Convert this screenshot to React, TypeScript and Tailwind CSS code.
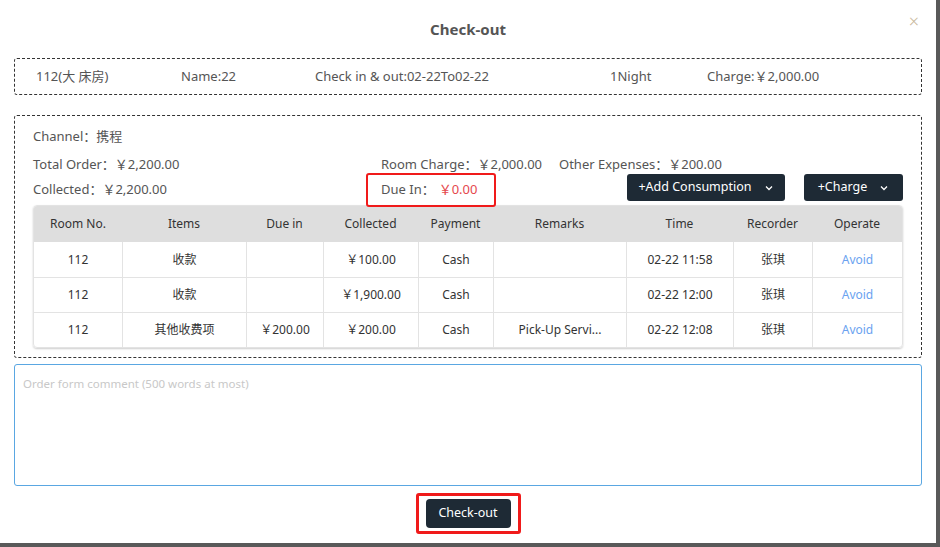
import React from "react";

const F = { fontFamily: '"Noto Sans", "Noto Sans CJK SC", sans-serif' };

const Chevron = () => (
  <svg width="10" height="10" viewBox="0 0 10 10" className="ml-[12px]">
    <path d="M2 3.5 L5 6.5 L8 3.5" fill="none" stroke="white" strokeWidth="1.3" />
  </svg>
);

const cols = [
  { h: "Room No.", w: "w-[88px]" },
  { h: "Items", w: "w-[124px]" },
  { h: "Due in", w: "w-[77px]" },
  { h: "Collected", w: "w-[95px]" },
  { h: "Payment", w: "w-[75px]" },
  { h: "Remarks", w: "w-[133px]" },
  { h: "Time", w: "w-[107px]" },
  { h: "Recorder", w: "w-[79px]" },
  { h: "Operate", w: "flex-1" },
];

const rows = [
  ["112", "收款", "", "￥100.00", "Cash", "", "02-22 11:58", "张琪"],
  ["112", "收款", "", "￥1,900.00", "Cash", "", "02-22 12:00", "张琪"],
  ["112", "其他收费项", "￥200.00", "￥200.00", "Cash", "Pick-Up Servi...", "02-22 12:08", "张琪"],
];

export default function App() {
  return (
    <div className="w-[940px] h-[547px] bg-[#595959] overflow-hidden" style={F}>
      <div className="w-[936px] h-[543px] bg-white flex flex-col text-[#555]">
        <div className="relative h-[58px] flex items-center justify-center">
          <span className="text-[15px] font-bold text-[#555] mt-[1px]">Check-out</span>
          <span className="absolute right-[17px] top-[8px] text-[#c8b89a] text-[18px] font-light">×</span>
        </div>
        <div className="mx-[14px] h-[37px] border border-dashed border-[#333] rounded-[3px] flex items-center text-[13px] text-[#555]">
          <span className="ml-[21px] w-[145px]">112(大 床房)</span>
          <span className="w-[134px]">Name:22</span>
          <span className="w-[295px]">Check in &amp; out:02-22To02-22</span>
          <span className="w-[97px]">1Night</span>
          <span>Charge:￥2,000.00</span>
        </div>
        <div className="mx-[14px] mt-[20px] h-[243px] border border-dashed border-[#333] rounded-[3px] px-[18px] pt-[10px] text-[13px]">
          <div className="h-[20px] leading-[20px]">Channel：携程</div>
          <div className="h-[25px] mt-[6px] flex items-center">
            <span className="w-[348px]">Total Order：￥2,200.00</span>
            <span className="w-[178px]">Room Charge：￥2,000.00</span>
            <span>Other Expenses：￥200.00</span>
          </div>
          <div className="h-[25px] flex items-center">
            <span className="w-[333px]">Collected：￥2,200.00</span>
            <span className="h-[34px] w-[130px] shrink-0 border-2 border-[#f01a1a] rounded-[3px] flex items-center pl-[13px]">
              Due In：<span className="text-[#e5484d] ml-[4px]">￥0.00</span>
            </span>
            <span className="ml-[131px] mb-[4px] h-[27px] w-[158px] shrink-0 bg-[#1e2a35] rounded-[3px] text-white flex items-center justify-center text-[12.5px]">
              +Add Consumption<Chevron />
            </span>
            <span className="ml-[19px] mb-[4px] h-[27px] w-[99px] shrink-0 bg-[#1e2a35] rounded-[3px] text-white flex items-center justify-center text-[12.5px]">
              +Charge<Chevron />
            </span>
          </div>
          <div className="mt-[3px] rounded-[4px] overflow-hidden shadow-[0_1px_2px_rgba(0,0,0,0.2)] border border-[#e3e3e3] text-[12px] text-[#333]">
            <div className="h-[36px] bg-[#dedede] flex">
              {cols.map((c, i) => (
                <div key={i} className={`${c.w} flex items-center justify-center`}>{c.h}</div>
              ))}
            </div>
            {rows.map((r, ri) => (
              <div key={ri} className={`h-[35px] flex ${ri > 0 ? "border-t border-[#e3e3e3]" : ""}`}>
                {cols.map((c, i) => (
                  <div
                    key={i}
                    className={`${c.w} flex items-center justify-center ${i > 0 ? "border-l border-[#e3e3e3]" : ""} ${i === 8 ? "text-[#6aa2f0]" : ""}`}
                  >
                    {i === 8 ? "Avoid" : r[i]}
                  </div>
                ))}
              </div>
            ))}
          </div>
        </div>
        <div className="mx-[14px] mt-[6px] h-[122px] border border-[#5aa7e2] rounded-[3px] px-[8px] pt-[10px] text-[11.5px] text-[#c8c8c8]">
          Order form comment (500 words at most)
        </div>
        <div className="flex justify-center mt-[7px]">
          <div className="w-[105px] h-[41px] border-[3px] border-[#f01a1a] rounded-[3px] flex items-center justify-center">
            <span className="w-[85px] h-[29px] bg-[#1e2a35] rounded-[4px] text-white text-[12.5px] flex items-center justify-center">
              Check-out
            </span>
          </div>
        </div>
      </div>
    </div>
  );
}
